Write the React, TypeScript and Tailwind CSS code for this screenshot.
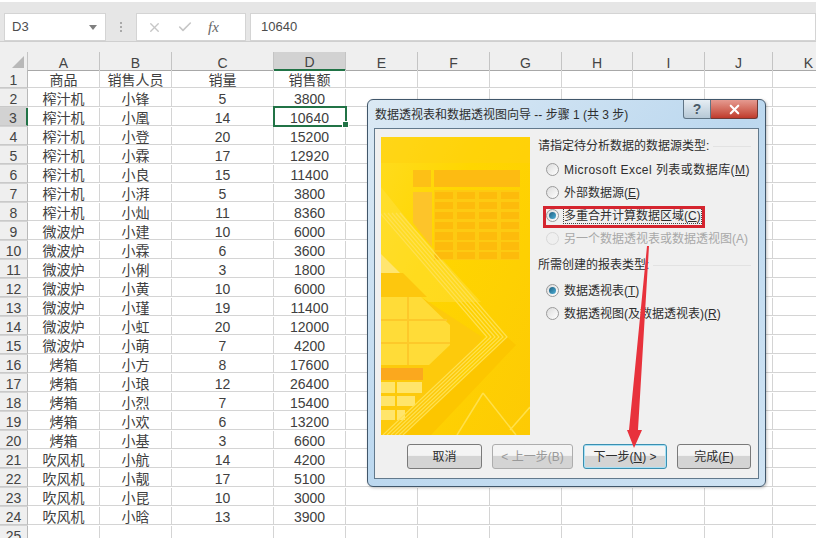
import { Check, X } from "lucide-react";

const rows: [string, string, string, string][] = [
  ["商品", "销售人员", "销量", "销售额"],
  ["榨汁机", "小锋", "5", "3800"],
  ["榨汁机", "小凰", "14", "10640"],
  ["榨汁机", "小登", "20", "15200"],
  ["榨汁机", "小霖", "17", "12920"],
  ["榨汁机", "小良", "15", "11400"],
  ["榨汁机", "小湃", "5", "3800"],
  ["榨汁机", "小灿", "11", "8360"],
  ["微波炉", "小建", "10", "6000"],
  ["微波炉", "小霖", "6", "3600"],
  ["微波炉", "小俐", "3", "1800"],
  ["微波炉", "小黄", "10", "6000"],
  ["微波炉", "小瑾", "19", "11400"],
  ["微波炉", "小虹", "20", "12000"],
  ["微波炉", "小萌", "7", "4200"],
  ["烤箱", "小方", "8", "17600"],
  ["烤箱", "小琅", "12", "26400"],
  ["烤箱", "小烈", "7", "15400"],
  ["烤箱", "小欢", "6", "13200"],
  ["烤箱", "小基", "3", "6600"],
  ["吹风机", "小航", "14", "4200"],
  ["吹风机", "小靓", "17", "5100"],
  ["吹风机", "小昆", "10", "3000"],
  ["吹风机", "小晗", "13", "3900"],
  ["", "", "", ""],
];

const cols = ["A", "B", "C", "D", "E", "F", "G", "H", "I", "J", "K"];
const gridCols = "grid grid-cols-[28px_72px_72px_102px_72px_72px_72px_72px_71px_72px_68px_72px]";

function Radio({ checked, disabled }: { checked?: boolean; disabled?: boolean }) {
  return (
    <span
      className={`flex h-[13px] w-[13px] shrink-0 items-center justify-center rounded-full border ${
        disabled ? "border-[#d8d8d8] bg-[#efefef]" : "border-[#9a9a9a] bg-gradient-to-br from-[#dcdcdc] to-white"
      }`}
    >
      {checked && <span className="h-[7px] w-[7px] rounded-full bg-gradient-to-br from-[#1d5f80] to-[#4fb0d8]" />}
    </span>
  );
}

function Option({ label, checked, disabled, focus }: { label: React.ReactNode; checked?: boolean; disabled?: boolean; focus?: boolean }) {
  return (
    <div className="flex h-[23px] items-center gap-[5px] pl-[8px]">
      <Radio checked={checked} disabled={disabled} />
      <span
        className={`whitespace-nowrap leading-[14px] ${disabled ? "text-[#a8a8a8]" : ""} ${
          focus ? "outline-1 outline-dotted outline-[#444]" : ""
        }`}
      >
        {label}
      </span>
    </div>
  );
}

function SectionTitle({ text }: { text: string }) {
  return (
    <div className="flex items-center gap-1 whitespace-nowrap">
      {text}
      <span className="h-px flex-1 bg-[#e2e2e2]" />
    </div>
  );
}

function WizardButton({ children, width, disabled, primary }: { children: React.ReactNode; width: string; disabled?: boolean; primary?: boolean }) {
  return (
    <div
      className={`flex h-[25px] items-center justify-center rounded-[3px] border bg-gradient-to-b from-[#f4f4f4] from-45% to-[#d4d4d4] to-50% ${width} ${
        disabled ? "border-[#adadad] text-[#9a9a9a]" : primary ? "border-[#3b8fb0] shadow-[inset_0_0_0_1px_#a8e0f5]" : "border-[#7a7a7a]"
      }`}
    >
      {children}
    </div>
  );
}

function WizardArt() {
  const cellX = [54, 76, 98, 120];
  const cellY: [number, number][] = [[55, 7], [65, 7], [75, 7], [85, 7], [95, 8], [105, 8], [115, 7]];
  const tips = [126, 122, 118, 114, 110, 106];
  return (
    <svg viewBox="0 0 149 298" className="h-[298px] w-[149px] shrink-0">
      <defs>
        <linearGradient id="base" x1="0" y1="0" x2="1" y2="1">
          <stop offset="0" stopColor="#ffdc20" />
          <stop offset="0.35" stopColor="#ffd600" />
          <stop offset="1" stopColor="#fdca04" />
        </linearGradient>
      </defs>
      <rect width="149" height="298" fill="url(#base)" />
      <rect width="149" height="26" fill="#ffcf10" opacity="0.5" />
      <polygon points="0,50 32,90 100,165 0,165" fill="#ffe34c" opacity="0.4" />
      <rect x="32" y="33" width="18" height="17" fill="#fdc016" />
      <rect x="53" y="33" width="86" height="17" fill="#fdbb12" />
      <polygon points="32,55 51,55 51,110 32,86" fill="#fdc42a" />
      <rect x="53" y="53" width="86" height="70" fill="#fdca12" />
      {cellX.map((x) =>
        cellY.map(([y, h]) => <rect key={`${x}-${y}`} x={x} y={y} width="18" height={h} fill="#fdbb0c" />),
      )}
      <polygon points="0,117 19,136 0,136" fill="#ffe570" />
      <polygon points="0,136 22,136 46,160 0,160" fill="#fdc70e" />
      <polygon points="40,160 101,200 40,298 0,298 0,228 48,228 69,208 69,188" fill="#fdca0c" />
      <polygon points="0,160 40,160 69,188 69,208 48,228 0,228" fill="#ffdc38" />
      <g stroke="#fdc92a" strokeWidth="2">
        <line x1="0" y1="183" x2="66" y2="183" />
        <line x1="0" y1="206" x2="69" y2="206" />
        <line x1="27" y1="160" x2="27" y2="228" />
      </g>
      <rect x="0" y="231" width="42" height="12" fill="#fba81e" />
      <g fill="#ffe56b">
        <rect x="0" y="245" width="14" height="11" />
        <rect x="16" y="245" width="25" height="11" />
        <rect x="0" y="259" width="14" height="10" />
        <rect x="16" y="259" width="18" height="10" />
        <rect x="0" y="273" width="14" height="10" />
        <rect x="16" y="273" width="8" height="10" />
      </g>
      <polygon points="126,200 135,208 50,298 22,298" fill="#fcc600" />
      <g fill="none" stroke="#ffe150" strokeWidth="1.2">
        {tips.map((x) => (
          <polyline key={x} points={`${x - 107},76 ${x},200 ${x - 104},298`} />
        ))}
      </g>
      <g stroke="#ffe04a" strokeWidth="1.5">
        <line x1="102" y1="256" x2="135" y2="298" />
        <line x1="102" y1="256" x2="76" y2="298" />
        <line x1="149" y1="270" x2="129" y2="293" />
      </g>
    </svg>
  );
}

export default function App() {
  return (
    <div className="relative h-[538px] w-[816px] overflow-hidden bg-white text-[14px] text-[#404040] [font-family:'Liberation_Sans','Noto_Sans_CJK_SC',sans-serif]">
      {/* formula bar */}
      <div className="flex h-[41px] items-center gap-[4px] border-t-2 border-t-white bg-[#e6e6e6] pl-[4px] pt-[11px] text-[#4c4c4c]">
        <div className="flex h-[28px] w-[102px] items-center justify-between border border-[#d4d4d4] bg-white px-[7px] text-[13px]">
          D3
          <svg width="8" height="5" viewBox="0 0 8 5" className="mr-px">
            <polygon points="0,0 8,0 4,5" fill="#7f7f7f" />
          </svg>
        </div>
        <div className="mx-[10px] flex flex-col gap-[2px]">
          <span className="h-[2px] w-[2px] bg-[#a9a9a9]" />
          <span className="h-[2px] w-[2px] bg-[#a9a9a9]" />
          <span className="h-[2px] w-[2px] bg-[#a9a9a9]" />
        </div>
        <div className="flex h-[28px] w-[110px] items-center border border-[#d4d4d4] bg-white pl-[10px]">
          <X size={15} strokeWidth={2.2} className="text-[#c6c6c6]" />
          <Check size={16} strokeWidth={2.4} className="ml-[15px] text-[#c6c6c6]" />
          <span className="ml-[15px] text-[15px] italic text-[#666] [font-family:'Liberation_Serif',serif]">fx</span>
        </div>
        <div className="flex h-[28px] flex-1 items-center border border-[#d4d4d4] bg-white pl-[10px] text-[13px]">10640</div>
      </div>

      {/* column headers */}
      <div className={`${gridCols} h-[29px] border-t border-t-[#cfcfcf] bg-[#efefef] pt-[10px]`}>
        <div className="flex items-end justify-end border-b border-b-[#a8a8a8] border-r border-r-[#c4c4c4] pb-[2px] pr-[3px]">
          <svg width="12" height="12" viewBox="0 0 12 12">
            <polygon points="12,0 12,12 0,12" fill="#b8b8b8" />
          </svg>
        </div>
        {cols.map((c) => (
          <div
            key={c}
            className={`flex items-center justify-center border-r border-r-[#c4c4c4] pt-[3px] leading-none text-[#444] ${
              c === "D" ? "border-b-2 border-b-[#217346] bg-[#d2d2d2]" : "border-b border-b-[#a8a8a8]"
            }`}
          >
            {c}
          </div>
        ))}
        <div className="border-b border-b-[#a8a8a8]" />
      </div>

      {/* sheet */}
      {rows.map((r, i) => {
        const n = i + 1;
        return (
          <div key={n} className={`${gridCols} h-[19px]`}>
            <div
              className={`flex items-center justify-center border-b border-b-[#c9c9c9] pt-[3px] leading-none text-[#444] ${
                n === 3 ? "border-r-2 border-r-[#217346] bg-[#d2d2d2]" : "border-r border-r-[#b8b8b8] bg-[#efefef]"
              }`}
            >
              {n}
            </div>
            {cols.map((c, j) => (
              <div
                key={c}
                className={`flex items-center justify-center whitespace-nowrap border-b border-r border-[#d4d4d4] pt-[3px] leading-none ${
                  c === "D" && n === 3 ? "relative" : ""
                }`}
              >
                {j < 4 ? r[j] : ""}
                {c === "D" && n === 3 && (
                  <>
                    <span className="absolute -left-px -top-[2px] h-[21px] w-[74px] border-2 border-[#217346]" />
                    <span className="absolute -bottom-[2px] -right-[3px] h-[5px] w-[5px] bg-[#217346] outline-1 outline-white" />
                  </>
                )}
              </div>
            ))}
            <div className="border-b border-[#d4d4d4]" />
          </div>
        );
      })}

      {/* wizard dialog */}
      <div className="absolute left-[367px] top-[99px] flex h-[388px] w-[399px] flex-col rounded-[6px] border border-[#40566a] bg-gradient-to-br from-[#dbe9f4] via-[#bcd8ef] to-[#cfe3f3] px-[6px] pb-[7px] text-[12px] text-[#2e2e2e] shadow-[1px_1px_3px_rgba(0,0,0,0.25)]">
        <div className="flex h-[28px] shrink-0 items-center justify-between">
          <span className="pl-[1px] pt-[1px] whitespace-nowrap">数据透视表和数据透视图向导 -- 步骤 1 (共 3 步)</span>
          <div className="mr-px flex h-[19px] self-start">
            <div className="flex w-[28px] items-center justify-center rounded-bl-[3px] border border-t-0 border-[#5f7485] bg-gradient-to-b from-[#e6eef4] to-[#b6c8d6] text-[14px] font-bold text-[#4a5a68]">?</div>
            <div className="flex w-[47px] items-center justify-center rounded-br-[3px] border border-l-0 border-t-0 border-[#6e3a36] bg-gradient-to-b from-[#e59a90] to-[#bf3a2c]">
              <X size={15} strokeWidth={3.4} className="text-white" />
            </div>
          </div>
        </div>
        <div className="flex flex-1 flex-col border border-[#62798c] bg-[#f0f0f0] pl-[6px] pr-[7px] pt-[8px]">
          <div className="flex gap-[8px]">
            <WizardArt />
            <div className="flex min-w-0 flex-1 flex-col">
              <SectionTitle text="请指定待分析数据的数据源类型:" />
              <div className="mt-[3px] flex flex-col">
                <Option label={<span className="tracking-[0.45px]">Microsoft Excel 列表或数据库(<u>M</u>)</span>} />
                <Option label={<>外部数据源(<u>E</u>)</>} />
                <Option checked focus label={<>多重合并计算数据区域(<u>C</u>)</>} />
                <Option disabled label="另一个数据透视表或数据透视图(A)" />
              </div>
              <div className="mt-[6px]">
                <SectionTitle text="所需创建的报表类型:" />
              </div>
              <div className="mt-[5px] flex flex-col">
                <Option checked label={<>数据透视表(<u>T</u>)</>} />
                <Option label={<>数据透视图(及数据透视表)(<u>R</u>)</>} />
              </div>
            </div>
          </div>
          <div className="mt-[9px] flex justify-end gap-[10px]">
            <WizardButton width="w-[75px]">取消</WizardButton>
            <WizardButton width="w-[81px]" disabled>&lt; 上一步(B)</WizardButton>
            <WizardButton width="w-[84px]" primary>下一步(<u>N</u>) &gt;</WizardButton>
            <WizardButton width="w-[74px]">完成(<u>F</u>)</WizardButton>
          </div>
        </div>
      </div>

      {/* annotation: red box and arrow */}
      <div className="absolute left-[543px] top-[206px] h-[22px] w-[162px] border-[3px] border-[#d5252f]" />
      <svg className="absolute left-[620px] top-[240px]" width="40" height="210" viewBox="0 0 40 210">
        <polygon points="27,6 29,6 18,190 22,190 14,208 7,190 9,190" fill="#e8323c" />
      </svg>
    </div>
  );
}
